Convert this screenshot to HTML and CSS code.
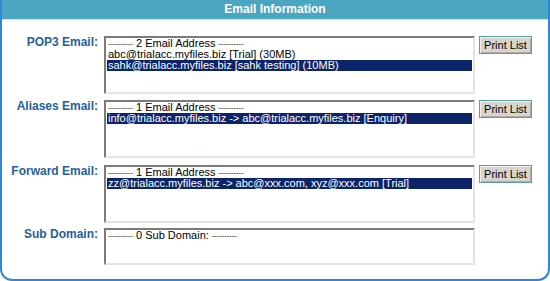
FILE: index.html
```html
<!DOCTYPE html>
<html lang="en">
<head>
  <meta charset="UTF-8" />
  <title>Email Information</title>
  <link rel="stylesheet" href="styles.css">
</head>
<body>
  <div class="panel">
    <div class="panel-title">Email Information</div>

    <div class="rows">
      <!-- POP3 -->
      <div class="row">
        <div class="row-label">POP3 Email:</div>
        <div class="listbox">
          <div class="opt"><span class="dash">----------</span> 2 Email Address <span class="dash">----------</span></div>
          <div class="opt">abc@trialacc.myfiles.biz [Trial] (30MB)</div>
          <div class="opt selected">sahk@trialacc.myfiles.biz [sahk testing] (10MB)</div>
        </div>
        <button class="print-btn">Print List</button>
      </div>

      <!-- Aliases -->
      <div class="row">
        <div class="row-label">Aliases Email:</div>
        <div class="listbox">
          <div class="opt"><span class="dash">----------</span> 1 Email Address <span class="dash">----------</span></div>
          <div class="opt selected">info@trialacc.myfiles.biz -&gt; abc@trialacc.myfiles.biz [Enquiry]</div>
        </div>
        <button class="print-btn">Print List</button>
      </div>

      <!-- Forward -->
      <div class="row">
        <div class="row-label">Forward Email:</div>
        <div class="listbox">
          <div class="opt"><span class="dash">----------</span> 1 Email Address <span class="dash">----------</span></div>
          <div class="opt selected">zz@trialacc.myfiles.biz -&gt; abc@xxx.com, xyz@xxx.com [Trial]</div>
        </div>
        <button class="print-btn">Print List</button>
      </div>

      <!-- Sub domain -->
      <div class="row">
        <div class="row-label">Sub Domain:</div>
        <div class="listbox short">
          <div class="opt"><span class="dash">----------</span> 0 Sub Domain: <span class="dash">----------</span></div>
        </div>
      </div>
    </div>
  </div>
</body>
</html>
```

FILE: styles.css
```css
body {
  margin: 0;
  background: #ffffff;
  font-family: "Liberation Sans", Arial, sans-serif;
}

.panel {
  width: 550px;
  height: 281px;
  box-sizing: border-box;
  border: 2px solid #2f86d8;
  border-top: none;
  border-radius: 0 0 12px 12px;
  background: #ffffff;
}

.panel-title {
  height: 19px;
  background: #4ba6c1;
  border-bottom: 1px solid #c8e6ee;
  color: #ffffff;
  font-weight: bold;
  font-size: 12px;
  line-height: 19px;
  text-align: center;
}

.rows {
  padding-top: 16px;
  display: flex;
  flex-direction: column;
}

.row {
  display: flex;
  align-items: flex-start;
  margin-bottom: 6px;
}

.row:nth-child(2) {
  margin-bottom: 7px;
}

.row:nth-child(3) {
  margin-bottom: 5px;
}

.row-label {
  width: 96px;
  padding-right: 6px;
  text-align: right;
  color: #1f5f9e;
  font-weight: bold;
  font-size: 12px;
  line-height: 13px;
}

.listbox {
  width: 371px;
  height: 58px;
  box-sizing: border-box;
  border: 2px solid;
  border-color: #7b7b7b #e6e4de #e6e4de #7b7b7b;
  background: #ffffff;
  padding: 0 1px;
  overflow: hidden;
  font-size: 11px;
  color: #000000;
}

.listbox.short {
  height: 37px;
}

.opt {
  line-height: 11px;
  height: 11px;
  padding-left: 1px;
  white-space: nowrap;
}

.opt .dash {
  font-size: 7.5px;
  vertical-align: 1px;
}

.opt.selected {
  background: #0c2469;
  color: #ffffff;
}

.print-btn {
  margin-left: 4px;
  width: 53px;
  height: 18px;
  padding: 0;
  background: #d8d5cf;
  border: 1px solid #5f9aa6;
  box-shadow: inset 1px 1px 0 #f2f1ed, inset -1px -1px 0 #b0ada6;
  font-family: "Liberation Sans", Arial, sans-serif;
  font-size: 11px;
  color: #000000;
}
```
